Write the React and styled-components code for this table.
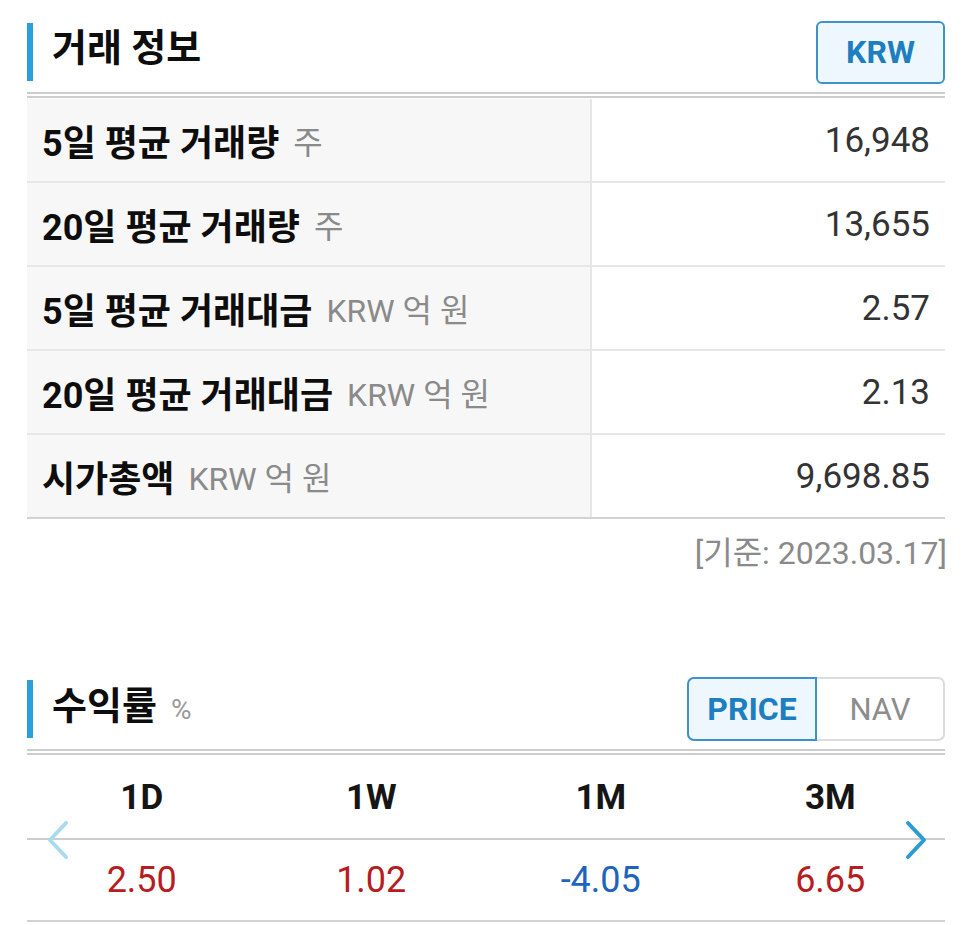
import React from "react";
import styled, { createGlobalStyle } from "styled-components";

const GlobalStyle = createGlobalStyle`
  body {
    margin: 0;
    background: #ffffff;
    font-family: Roboto, "Noto Sans CJK KR", sans-serif;
    color: #111;
  }
`;

const Page = styled.div`
  width: 918px;
  padding: 20px 27px 0;
`;

const SectionHeader = styled.div`
  display: flex;
  align-items: center;
  justify-content: space-between;
  height: 64px;
`;

const TitleWrap = styled.div`
  display: flex;
  align-items: center;
  height: 100%;
`;

const Bar = styled.span`
  width: 6px;
  height: 58px;
  background: #2b9fd9;
  margin-right: 19px;
`;

const Title = styled.h2`
  margin: 0 0 ${(p) => p.$lift || 6}px;
  font-size: 38px;
  font-weight: 700;
  line-height: 42px;
  color: #0d0d0d;
`;

const TitleUnit = styled.span`
  font-size: 28px;
  font-weight: 400;
  color: #999;
  margin-left: 14px;
`;

const CurrencyButton = styled.button`
  width: 129px;
  height: 63px;
  border: 2px solid #3d93c8;
  border-radius: 6px;
  background: #eef7fd;
  color: #1d7fc0;
  font-family: Roboto, sans-serif;
  font-size: 32px;
  font-weight: 700;
  padding: 0;
`;

const Toggle = styled.div`
  display: flex;
  width: 258px;
  height: 64px;
  border: 2px solid #dcdcdc;
  border-radius: 7px;
  box-sizing: border-box;
`;

const ToggleItem = styled.button`
  flex: 1;
  margin: ${(p) => (p.$active ? "-2px 0 -2px -2px" : "0")};
  border: ${(p) => (p.$active ? "2px solid #3d93c8" : "none")};
  border-radius: ${(p) => (p.$active ? "7px 0 0 7px" : "0 7px 7px 0")};
  background: ${(p) => (p.$active ? "#eef7fd" : "#fff")};
  color: ${(p) => (p.$active ? "#1d7fc0" : "#8c8c8c")};
  font-family: Roboto, sans-serif;
  font-size: ${(p) => (p.$active ? 32 : 31)}px;
  font-weight: ${(p) => (p.$active ? 700 : 400)};
  padding: 0;
`;

const DoubleRule = styled.div`
  margin-top: 8px;
  height: 2px;
  border-top: 2px solid #cdcdcd;
  border-bottom: 2px solid #cdcdcd;
`;

const Table = styled.div`
  display: flex;
  flex-direction: column;
  margin-top: 1px;
`;

const Row = styled.div`
  display: grid;
  grid-template-columns: 565px 1fr;
  height: 82px;
  border-bottom: 2px solid ${(p) => (p.$last ? "#d2d2d2" : "#e6e6e6")};
`;

const LabelCell = styled.div`
  display: flex;
  align-items: center;
  padding-left: 15px;
  background: #f7f7f7;
  border-right: 2px solid #e6e6e6;
  font-size: 36px;
  font-weight: 700;
  color: #0d0d0d;
  white-space: nowrap;
`;

const Unit = styled.span`
  font-size: 32px;
  font-weight: 400;
  color: #8a8a8a;
  margin-left: 14px;
`;

const ValueCell = styled.div`
  display: flex;
  align-items: center;
  justify-content: flex-end;
  padding-right: 15px;
  font-size: 35px;
  color: #333;
`;

const DateNote = styled.div`
  margin-top: 16px;
  margin-right: -2px;
  text-align: right;
  font-size: 32px;
  line-height: 36px;
  color: #8a8a8a;
`;

const ReturnsSection = styled.section`
  margin-top: 106px;
`;

const Returns = styled.div`
  position: relative;
  margin-top: 1px;
`;

const Grid = styled.div`
  display: grid;
  grid-template-columns: repeat(4, 1fr);
  height: ${(p) => p.$h}px;
  align-items: center;
  justify-items: center;
  border-bottom: 2px solid ${(p) => p.$line};
`;

const Period = styled.div`
  font-size: 35px;
  font-weight: 700;
  color: #151515;
`;

const Ret = styled.div`
  font-size: 36px;
  color: ${(p) => (p.$neg ? "#1e64bd" : "#b61d22")};
`;

const Arrow = styled.svg`
  position: absolute;
  top: 64px;
  ${(p) => (p.$side === "left" ? "left: 19px;" : "right: 17px;")}
`;

const rows = [
  { label: "5일 평균 거래량", unit: "주", value: "16,948" },
  { label: "20일 평균 거래량", unit: "주", value: "13,655" },
  { label: "5일 평균 거래대금", unit: "KRW 억 원", value: "2.57" },
  { label: "20일 평균 거래대금", unit: "KRW 억 원", value: "2.13" },
  { label: "시가총액", unit: "KRW 억 원", value: "9,698.85" },
];

const periods = [
  { p: "1D", v: "2.50" },
  { p: "1W", v: "1.02" },
  { p: "1M", v: "-4.05" },
  { p: "3M", v: "6.65" },
];

export default function App() {
  return (
    <>
      <GlobalStyle />
      <Page>
        <SectionHeader>
          <TitleWrap>
            <Bar />
            <Title $lift={9}>거래 정보</Title>
          </TitleWrap>
          <CurrencyButton>KRW</CurrencyButton>
        </SectionHeader>
        <DoubleRule />
        <Table>
          {rows.map((r, i) => (
            <Row key={r.label} $last={i === rows.length - 1}>
              <LabelCell>
                {r.label}
                <Unit>{r.unit}</Unit>
              </LabelCell>
              <ValueCell>{r.value}</ValueCell>
            </Row>
          ))}
        </Table>
        <DateNote>[기준: 2023.03.17]</DateNote>

        <ReturnsSection>
          <SectionHeader>
            <TitleWrap>
              <Bar />
              <Title $lift={3}>
                수익률<TitleUnit>%</TitleUnit>
              </Title>
            </TitleWrap>
            <Toggle>
              <ToggleItem $active>PRICE</ToggleItem>
              <ToggleItem>NAV</ToggleItem>
            </Toggle>
          </SectionHeader>
          <DoubleRule />
          <Returns>
            <Grid $h={82} $line="#cdcdcd">
              {periods.map((x) => (
                <Period key={x.p}>{x.p}</Period>
              ))}
            </Grid>
            <Grid $h={80} $line="#d2d2d2">
              {periods.map((x) => (
                <Ret key={x.p} $neg={x.v.startsWith("-")}>
                  {x.v}
                </Ret>
              ))}
            </Grid>
            <Arrow $side="left" width="24" height="40" viewBox="0 0 24 40">
              <polyline
                points="20,3 4,20 20,37"
                fill="none"
                stroke="#a9daf1"
                strokeWidth="4"
                strokeLinecap="round"
                strokeLinejoin="round"
              />
            </Arrow>
            <Arrow $side="right" width="24" height="40" viewBox="0 0 24 40">
              <polyline
                points="4,3 20,20 4,37"
                fill="none"
                stroke="#2a9bd6"
                strokeWidth="4"
                strokeLinecap="round"
                strokeLinejoin="round"
              />
            </Arrow>
          </Returns>
        </ReturnsSection>
      </Page>
    </>
  );
}
